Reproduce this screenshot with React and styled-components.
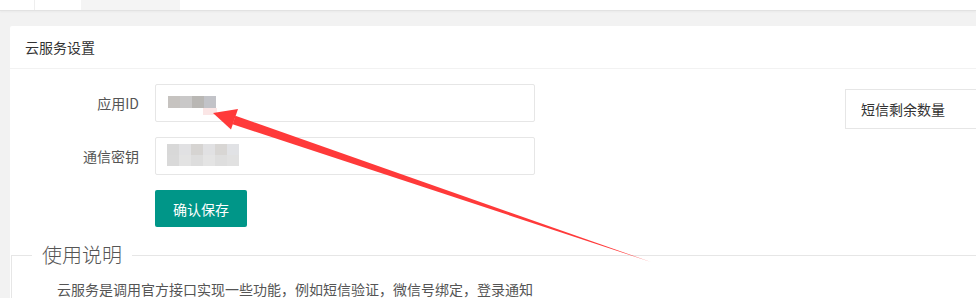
import React from "react";
import styled, { createGlobalStyle } from "styled-components";

const Global = createGlobalStyle`
  html, body { margin: 0; padding: 0; overflow: hidden; }
  body {
    background: #f2f2f2;
    font-family: "Noto Sans CJK SC", "Noto Sans", sans-serif;
    font-size: 14px;
    color: #333;
  }
  * { box-sizing: border-box; }
`;

const Page = styled.div`
  position: relative;
  width: 976px;
  height: 298px;
  overflow: hidden;
`;

const TopBar = styled.div`
  display: flex;
  height: 11px;
  background: #fff;
  border-bottom: 1px solid #e2e2e2;
  box-shadow: 0 1px 2px rgba(0, 0, 0, 0.04);
`;

const TabItem = styled.div`
  width: ${(p) => p.$w}px;
  height: 100%;
  background: ${(p) => (p.$active ? "#f4f4f4" : "#fff")};
  border-right: ${(p) => (p.$line ? "1px solid #eeeeee" : "none")};
`;

const Card = styled.div`
  margin: 15px -60px 0 10px;
  background: #fff;
  border-radius: 2px;
  padding-bottom: 20px;
`;

const CardHeader = styled.div`
  height: 43px;
  line-height: 42px;
  padding: 0 15px;
  border-bottom: 1px solid #f2f2f2;
  color: #333;
  font-size: 14px;
`;

const CardBody = styled.div`
  display: flex;
  padding-top: 15px;
`;

const LeftCol = styled.div`
  width: 835px;
`;

const Form = styled.div`
  display: grid;
  grid-template-columns: 145px 380px;
  row-gap: 15px;
`;

const Label = styled.div`
  height: 38px;
  line-height: 38px;
  padding-right: 16px;
  text-align: right;
  color: #555;
  font-size: 14px;
`;

const Field = styled.div`
  height: 38px;
  border: 1px solid #e6e6e6;
  border-radius: 2px;
  background: #fff;
  display: flex;
  align-items: center;
  padding-left: ${(p) => p.$pl}px;
`;

const Mosaic = styled.div`
  display: grid;
  grid-template-columns: repeat(${(p) => p.$cols}, 12px);
  grid-auto-rows: ${(p) => p.$rh}px;
  margin-top: -2px;
  filter: blur(0.3px);
`;

const Cell = styled.div`
  background: ${(p) => p.$c};
`;

const Spacer = styled.div``;

const SaveButton = styled.button`
  width: 92px;
  height: 37px;
  border: none;
  border-radius: 2px;
  background: #009688;
  color: #fff;
  font-family: inherit;
  font-size: 14px;
  padding: 0;
  cursor: pointer;
`;

const RightCol = styled.div`
  flex: 1;
`;

const StatBox = styled.div`
  margin-top: 5px;
  height: 40px;
  line-height: 38px;
  border: 1px solid #e6e6e6;
  padding: 0 15px;
  color: #333;
  font-size: 14px;
`;

const Fieldset = styled.fieldset`
  margin: 13px 0 0 1px;
  padding: 8px 0 10px 0;
  border: 1px solid #e6e6e6;
  border-right: none;
  min-width: 0;
`;

const Legend = styled.legend`
  margin-left: 20px;
  padding: 0 10px;
  font-size: 20px;
  font-weight: 300;
  line-height: 30px;
  color: #555;
`;

const Note = styled.p`
  margin: 0;
  padding-left: 45px;
  font-size: 14px;
  line-height: 22px;
  color: #555;
`;

const Overlay = styled.svg`
  position: absolute;
  left: 0;
  top: 0;
  pointer-events: none;
`;

const mosaicA = ["#c6c3c0", "#c9c8c8", "#b9b7b4", "#c2c3c8"];
const mosaicB = [
  "#d8d8d8", "#e1e1e3", "#d6d4d2", "#e1e1e3", "#d8d6d4", "#e1e2e5",
  "#d9d9d9", "#e3e3e3", "#dddddd", "#e4e4e4", "#dedede", "#e1e1e1",
];

export default function App() {
  return (
    <Page>
      <Global />
      <TopBar>
        <TabItem $w={35} $line />
        <TabItem $w={46} />
        <TabItem $w={99} $active />
      </TopBar>
      <Card>
        <CardHeader>云服务设置</CardHeader>
        <CardBody>
          <LeftCol>
            <Form>
              <Label>应用ID</Label>
              <Field $pl={12}>
                <Mosaic $cols={4} $rh={12}>
                  {mosaicA.map((c, i) => (
                    <Cell key={i} $c={c} />
                  ))}
                </Mosaic>
              </Field>
              <Label>通信密钥</Label>
              <Field $pl={11}>
                <Mosaic $cols={6} $rh={11}>
                  {mosaicB.map((c, i) => (
                    <Cell key={i} $c={c} />
                  ))}
                </Mosaic>
              </Field>
              <Spacer />
              <div>
                <SaveButton>确认保存</SaveButton>
              </div>
            </Form>
          </LeftCol>
          <RightCol>
            <StatBox>短信剩余数量</StatBox>
          </RightCol>
        </CardBody>
        <Fieldset>
          <Legend>使用说明</Legend>
          <Note>云服务是调用官方接口实现一些功能，例如短信验证，微信号绑定，登录通知</Note>
        </Fieldset>
      </Card>
      <Overlay width="976" height="298" viewBox="0 0 976 298">
        <rect x="203" y="108" width="14" height="7" fill="#fbe6e6" />
        <polygon points="235.4,115.8 651,262 232.6,124.2" fill="#ff3a3a" />
        <polygon points="213,113 238,109 231,129.5" fill="#ff3a3a" />
      </Overlay>
    </Page>
  );
}
